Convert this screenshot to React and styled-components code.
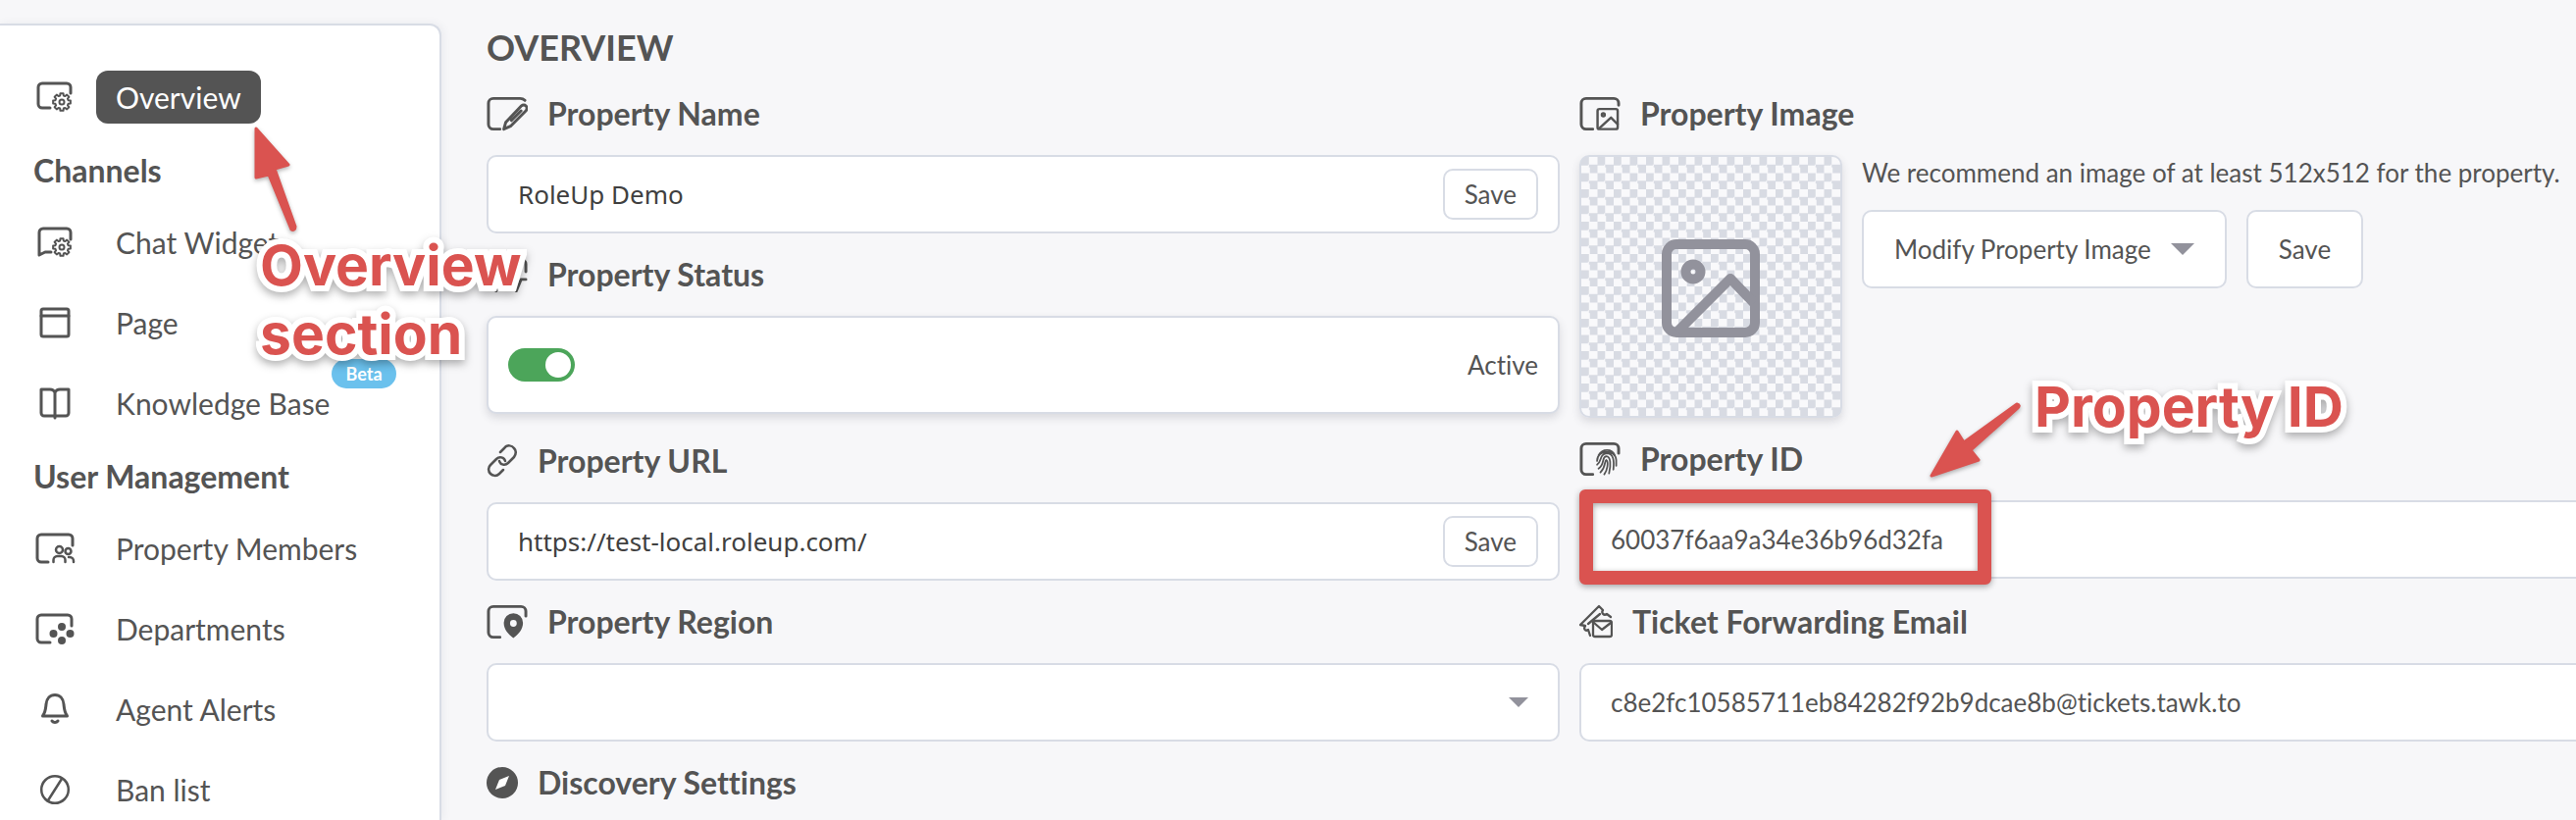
import React from "react";
import styled, { createGlobalStyle, css } from "styled-components";

const GlobalStyle = createGlobalStyle`
  *, *::before, *::after { box-sizing: border-box; }
  html, body, #root { height: 100%; }
  body {
    margin: 0;
    background: #f7f7f9;
    color: #545454;
    font-family: Lato, "Liberation Sans", sans-serif;
    font-size: 26px;
    line-height: 32px;
    font-variant-ligatures: none;
  }
  h1, h2, h3, p, ul { margin: 0; padding: 0; }
  ul { list-style: none; }
  button, input, select { font: inherit; color: inherit; font-variant-ligatures: none; }
`;

const Page = styled.div`
  position: relative;
  display: flex;
  min-height: 100%;
  height: 100vh;
  overflow: hidden;
`;

const Sidebar = styled.nav`
  flex: none;
  width: 450px;
  margin-top: 24px;
  padding: 46px 22px 0 34px;
  background: #fff;
  border: 2px solid #d8dce5;
  border-left: 0;
  border-bottom: 0;
  border-top-right-radius: 12px;
  box-shadow: 2px 0 8px rgba(80, 90, 120, 0.08);
`;

const NavItem = styled.li`
  position: relative;
  display: flex;
  align-items: center;
  height: ${(p) => (p.$top ? 54 : 82)}px;
`;

const NavIcon = styled.svg`
  flex: none;
  width: 44px;
  height: 44px;
  margin-right: 20px;
  fill: none;
  stroke: #545454;
  stroke-width: 3;
  stroke-linecap: round;
  stroke-linejoin: round;
`;

const NavLink = styled.a`
  padding: 7px 20px;
  border-radius: 12px;
  color: ${(p) => (p.$active ? "#fff" : "#545454")};
  background: ${(p) => (p.$active ? "#545454" : "transparent")};
  font-size: 30px;
  line-height: 40px;
  text-decoration: none;
  white-space: nowrap;
`;

const NavHeading = styled.h2`
  height: 40px;
  margin: ${(p) => (p.$first ? "28px 0 12px" : "14px 0 12px")};
  font-size: 32px;
  line-height: 40px;
`;

const Badge = styled.span`
  position: absolute;
  top: -4px;
  left: 304px;
  width: 66px;
  height: 30px;
  border-radius: 15px;
  background: #6bc1ed;
  color: #fff;
  font-size: 18px;
  font-weight: 700;
  line-height: 30px;
  text-align: center;
`;

const Main = styled.main`
  flex: 1;
  min-width: 0;
  padding: 26px 0 0 46px;
`;

const Title = styled.h1`
  font-size: 36px;
  line-height: 44px;
`;

const Columns = styled.div`
  display: grid;
  grid-template-columns: 1fr 1fr;
  gap: 20px;
  margin: 24px -78px 0 0;
`;

const Column = styled.div`
  display: flex;
  flex-direction: column;
  gap: 20px;
`;

const Field = styled.section`
  display: flex;
  flex-direction: column;
  gap: 20px;
`;

const FieldHeading = styled.h2`
  display: flex;
  align-items: center;
  gap: 20px;
  height: 44px;
  font-size: 32px;
  line-height: 44px;
  white-space: nowrap;
`;

const HeadIcon = styled.svg`
  flex: none;
  width: ${(p) => p.$w || 42}px;
  height: 36px;
  fill: none;
  stroke: #545454;
  stroke-width: 3;
  stroke-linecap: round;
  stroke-linejoin: round;
`;

const panel = css`
  background: #fff;
  border: 2px solid #d8dce5;
  border-radius: 10px;
`;

const Card = styled.div`
  ${panel}
  display: flex;
  align-items: center;
  height: ${(p) => (p.$tall ? 100 : 80)}px;
  padding: 0 20px 0 30px;
  margin-bottom: ${(p) => (p.$copy ? 2 : 0)}px;
  ${(p) =>
    p.$tall &&
    css`
      padding-left: 20px;
      margin-bottom: 6px;
      justify-content: space-between;
      box-shadow: 0 4px 8px rgba(60, 60, 80, 0.16);
    `}
`;

const TextInput = styled.input`
  flex: 1;
  min-width: 0;
  padding: 0;
  border: 0;
  outline: 0;
  background: none;
  color: #404040;
  font-family: "Noto Sans", sans-serif;
  font-size: 26px;
  line-height: 40px;
  ${(p) => p.readOnly && css`color: #545454; font-family: Lato, sans-serif;`}
`;

const Button = styled.button`
  ${panel}
  display: flex;
  align-items: center;
  justify-content: center;
  gap: 20px;
  height: ${(p) => (p.$small ? 52 : 80)}px;
  padding: 0 ${(p) => (p.$small ? 20 : 31)}px;
  white-space: nowrap;
`;

const Toggle = styled.input`
  appearance: none;
  width: 68px;
  height: 34px;
  margin: 0;
  padding: 4px;
  border-radius: 17px;
  background: #4ca55a;
  display: flex;
  justify-content: flex-end;
  &::before {
    content: "";
    width: 26px;
    height: 26px;
    border-radius: 50%;
    background: #fff;
  }
`;

const SelectWrap = styled.div`
  ${panel}
  display: flex;
  align-items: center;
  height: 80px;
  padding-right: 30px;
`;

const Select = styled.select`
  flex: 1;
  height: 76px;
  border: 0;
  background: none;
  appearance: none;
  padding: 0 30px;
`;

const Caret = styled.span`
  flex: none;
  border: solid transparent;
  border-width: ${(p) => (p.$small ? "10px 10px 0" : "12px 12px 0")};
  border-top-color: #92929c;
`;

const ImageRow = styled.div`
  display: flex;
  gap: 20px;
`;

const Placeholder = styled.div`
  flex: none;
  display: flex;
  align-items: center;
  justify-content: center;
  width: 268px;
  height: 268px;
  padding-top: 4px;
  border: 2px solid #d8dce5;
  border-radius: 10px;
  background: repeating-conic-gradient(#f9f9fb 0 25%, #d8dbe3 0 50%) 0 0 / 6.25% 6.25%;
  box-shadow: 0 4px 8px rgba(60, 60, 80, 0.16);
`;

const ImageControls = styled.div`
  display: flex;
  flex-direction: column;
  gap: 22px;
  padding-top: 2px;
`;

const ButtonRow = styled.div`
  display: flex;
  gap: 20px;
`;

const Note = styled.strong`
  position: absolute;
  left: ${(p) => p.$x}px;
  top: ${(p) => p.$y}px;
  color: #da5350;
  font: 700 57px/70px Inter, sans-serif;
  white-space: pre;
  -webkit-text-stroke: 12px #fff;
  paint-order: stroke fill;
  stroke-linejoin: round;
  filter: drop-shadow(0 4px 4px rgba(0, 0, 0, 0.3));
`;

const Highlight = styled.div`
  position: absolute;
  left: 1610px;
  top: 499px;
  width: 420px;
  height: 97px;
  border: 14px solid #da5350;
  border-radius: 6px;
  filter: drop-shadow(0 2px 3px rgba(0, 0, 0, 0.35));
  pointer-events: none;
`;

const Arrow = styled.svg`
  position: absolute;
  left: ${(p) => p.$x}px;
  top: ${(p) => p.$y}px;
  fill: #da5350;
  stroke: #da5350;
  stroke-width: 3;
  stroke-linejoin: round;
  filter: drop-shadow(0 2px 2px rgba(0, 0, 0, 0.3));
`;

/* Toothed gear outline centred on (cx, cy). */
const gearPath = (cx, cy, outer, inner) => {
  const pts = [];
  for (let i = 0; i < 8; i++) {
    const a = (i * Math.PI) / 4;
    [[-0.27, inner], [-0.17, outer], [0.17, outer], [0.27, inner]].forEach(([d, r]) =>
      pts.push(`${(cx + r * Math.cos(a + d)).toFixed(2)} ${(cy + r * Math.sin(a + d)).toFixed(2)}`)
    );
  }
  return `M${pts.join("L")}Z`;
};

const Gear = () => (
  <g strokeWidth="2">
    <path d={gearPath(29, 27, 9, 6.8)} />
    <circle cx="29" cy="27" r="2.5" />
  </g>
);

const navIcons = {
  overview: (
    <>
      <path d="M17 33H9a4 4 0 0 1-4-4V12a4 4 0 0 1 4-4h25a4 4 0 0 1 4 4v6" />
      <Gear />
    </>
  ),
  chat: (
    <>
      <path d="M18 32h-6l-6 3V12a4 4 0 0 1 4-4h24a4 4 0 0 1 4 4v7" />
      <Gear />
    </>
  ),
  page: (
    <>
      <rect x="8" y="8" width="28" height="28" rx="2" />
      <path d="M8 15h28" />
    </>
  ),
  book: <path d="M22 11c-1-2-3-3-5-3H8v24a3 3 0 0 0 3 3h22a3 3 0 0 0 3-3V8h-9c-2 0-4 1-5 3v26" />,
  members: (
    <>
      <path d="M15 36H8a4 4 0 0 1-4-4V12a4 4 0 0 1 4-4h28a4 4 0 0 1 4 4v7" />
      <g strokeWidth="2.5">
        <circle cx="26.5" cy="23.5" r="3.5" />
        <circle cx="35.5" cy="25" r="3" />
        <path d="M20.5 36v-2a4 4 0 0 1 4-4h4a4 4 0 0 1 4 4v2M36 31h1a4 4 0 0 1 4 4v1" />
      </g>
    </>
  ),
  departments: (
    <>
      <path d="M17 36H8a4 4 0 0 1-4-4V12a4 4 0 0 1 4-4h27a4 4 0 0 1 4 4v7" />
      <g fill="#545454" stroke="none">
        <circle cx="29" cy="20" r="4" />
        <circle cx="20.5" cy="27" r="4" />
        <circle cx="37.5" cy="27" r="4" />
        <circle cx="29" cy="34" r="4" />
      </g>
    </>
  ),
  bell: (
    <>
      <path d="M9.5 29c3-4 3-7 3.5-12 .5-6 4-9.500 9-9.500s8.500 3.500 9 9.500c.5 5 .5 8 3.500 12z" />
      <path d="M19 34c1.500 2 4.500 2 6 0" />
    </>
  ),
  ban: (
    <g strokeWidth="2.5">
      <circle cx="22" cy="22" r="13.8" />
      <path d="M15 33 29 11" />
    </g>
  ),
};

const frame = "M14 34H7a5 5 0 0 1-5-5V7a5 5 0 0 1 5-5h29a5 5 0 0 1 5 5v5";

const ImageGlyph = () => (
  <g strokeWidth="2.5">
    <rect x="19" y="13" width="21" height="21" rx="2" />
    <circle cx="25" cy="19" r="1.5" />
    <path d="m21 33 12-11 7 7" />
  </g>
);

function NavEntry({ icon, children, active, top, badge }) {
  return (
    <NavItem $top={top}>
      <NavIcon viewBox="0 0 44 44" aria-hidden="true">{navIcons[icon]}</NavIcon>
      <NavLink href="#" $active={active} aria-current={active ? "page" : undefined}>{children}</NavLink>
      {badge && <Badge>{badge}</Badge>}
    </NavItem>
  );
}

export default function App() {
  return (
    <Page>
      <GlobalStyle />
      <Sidebar aria-label="Property settings">
        <ul>
          <NavEntry icon="overview" active top>Overview</NavEntry>
        </ul>
        <NavHeading $first>Channels</NavHeading>
        <ul>
          <NavEntry icon="chat">Chat Widget</NavEntry>
          <NavEntry icon="page">Page</NavEntry>
          <NavEntry icon="book" badge="Beta">Knowledge Base</NavEntry>
        </ul>
        <NavHeading>User Management</NavHeading>
        <ul>
          <NavEntry icon="members">Property Members</NavEntry>
          <NavEntry icon="departments">Departments</NavEntry>
          <NavEntry icon="bell">Agent Alerts</NavEntry>
          <NavEntry icon="ban">Ban list</NavEntry>
        </ul>
      </Sidebar>

      <Main>
        <Title>OVERVIEW</Title>
        <Columns>
          <Column>
            <Field>
              <FieldHeading>
                <HeadIcon viewBox="0 0 43 36" aria-hidden="true">
                  <path d="M14 34H7a5 5 0 0 1-5-5V7a5 5 0 0 1 5-5h28q3 0 5 2" />
                  <path d="m18 34 2-7L36 10c4-3 8 1 5 5L25 31zM26 25l10-10" />
                </HeadIcon>
                <label htmlFor="name">Property Name</label>
              </FieldHeading>
              <Card>
                <TextInput id="name" defaultValue="RoleUp Demo" />
                <Button $small>Save</Button>
              </Card>
            </Field>
            <Field>
              <FieldHeading>
                <HeadIcon viewBox="0 0 43 36" aria-hidden="true">
                  <path d="M9 34H7a5 5 0 0 1-5-5V7a5 5 0 0 1 5-5h29a5 5 0 0 1 5 5v8M41 23h-5l-5 12M10 34v1" />
                </HeadIcon>
                <label htmlFor="status">Property Status</label>
              </FieldHeading>
              <Card $tall>
                <Toggle id="status" type="checkbox" role="switch" defaultChecked />
                <span>Active</span>
              </Card>
            </Field>
            <Field>
              <FieldHeading>
                <HeadIcon $w={32} viewBox="0 0 32 36" aria-hidden="true">
                  <path
                    strokeWidth="2.5"
                    d="m14 9 4-4c3-4 8-3 10 0 3 3 2 6 0 9l-6 6c-3 3-8 2-9-2M17 27l-4 4c-3 3-7 2-9 0-3-3-2-7 0-9l6-6c3-3 8-2 9 2"
                  />
                </HeadIcon>
                <label htmlFor="url">Property URL</label>
              </FieldHeading>
              <Card>
                <TextInput id="url" defaultValue="https://test-local.roleup.com/" />
                <Button $small>Save</Button>
              </Card>
            </Field>
            <Field>
              <FieldHeading>
                <HeadIcon viewBox="0 0 43 36" aria-hidden="true">
                  <path d={frame} />
                  <path
                    fill="#545454"
                    stroke="none"
                    fillRule="evenodd"
                    d="M28 9a10 10 0 0 0-10 10c0 7 5 12 10 16 5-4 10-9 10-16A10 10 0 0 0 28 9zm0 7a3.500 3.500 0 1 1 0 7 3.500 3.500 0 0 1 0-7z"
                  />
                </HeadIcon>
                <label htmlFor="region">Property Region</label>
              </FieldHeading>
              <SelectWrap>
                <Select id="region" defaultValue=""><option value="" /></Select>
                <Caret $small />
              </SelectWrap>
            </Field>
            <Field>
              <FieldHeading>
                <HeadIcon $w={32} viewBox="0 0 32 36" aria-hidden="true">
                  <circle cx="16" cy="18" r="16" fill="#545454" stroke="none" />
                  <path d="m23 11-4 10-10 4 4-10z" fill="#fff" stroke="none" />
                </HeadIcon>
                Discovery Settings
              </FieldHeading>
            </Field>
          </Column>

          <Column>
            <Field>
              <FieldHeading>
                <HeadIcon viewBox="0 0 43 36" aria-hidden="true">
                  <path d="M14 34H7a5 5 0 0 1-5-5V7a5 5 0 0 1 5-5h29a5 5 0 0 1 5 5v2" />
                  <ImageGlyph />
                </HeadIcon>
                Property Image
              </FieldHeading>
              <ImageRow>
                <Placeholder>
                  <svg width="100" height="100" viewBox="0 0 100 100" fill="none" stroke="#92929c" strokeWidth="10" strokeLinejoin="round" aria-hidden="true">
                    <rect x="5" y="5" width="90" height="90" rx="10" />
                    <circle cx="32" cy="33" r="7.5" />
                    <path d="m16 94 54-54 24 25" />
                  </svg>
                </Placeholder>
                <ImageControls>
                  <p>We recommend an image of at least 512x512 for the property.</p>
                  <ButtonRow>
                    <Button>Modify Property Image<Caret /></Button>
                    <Button>Save</Button>
                  </ButtonRow>
                </ImageControls>
              </ImageRow>
            </Field>
            <Field>
              <FieldHeading>
                <HeadIcon viewBox="0 0 43 36" aria-hidden="true">
                  <path d={frame} />
                  <g strokeWidth="1.8">
                    <path d="M20 14c4-7 14-7 17 0M18.500 20c0-12 19-13 20-1v6M18.500 24c5-3 2-11 10-12 7 0 8 7 7 17M20 28c7-5 3-12 8-13 5 0 5 10 3 18M22 32c6-6 4-12 6-13 3 2 1 11-2 15" />
                  </g>
                </HeadIcon>
                <label htmlFor="pid">Property ID</label>
              </FieldHeading>
              <Card $copy>
                <TextInput id="pid" readOnly value="60037f6aa9a34e36b96d32fa" />
              </Card>
            </Field>
            <Field>
              <FieldHeading>
                <HeadIcon $w={34} viewBox="0 0 34 36" aria-hidden="true">
                  <g strokeWidth="2.3">
                    <path d="M11 32l-2-6c-3 2-5-1-3-4l-5-1L20 2l4 4c-2 3 1 6 4 4l4 3M9 20 21 10" />
                    <rect x="14" y="17" width="19" height="16" rx="2" />
                    <path d="m15 19 8 7 9-7" />
                  </g>
                </HeadIcon>
                <label htmlFor="email">Ticket Forwarding Email</label>
              </FieldHeading>
              <Card $copy>
                <TextInput id="email" readOnly value="c8e2fc10585711eb84282f92b9dcae8b@tickets.tawk.to" />
              </Card>
            </Field>
          </Column>
        </Columns>
      </Main>

      <Arrow $x={250} $y={120} width="60" height="120" viewBox="250 120 60 120" aria-hidden="true">
        <path d="m261 131 33 37-14 4 21 59c0 3-2 4-4 3l-23-56-13 3z" />
      </Arrow>
      <Note $x={265} $y={236}>{"Overview\nsection"}</Note>
      <Arrow $x={1960} $y={400} width="110" height="100" viewBox="1960 400 110 100" aria-hidden="true">
        <path d="m1969 485 26-45 7 11 54-39q4 1 1 4l-48 43 8 10z" />
      </Arrow>
      <Note $x={2074} $y={380}>Property ID</Note>
      <Highlight />
    </Page>
  );
}
